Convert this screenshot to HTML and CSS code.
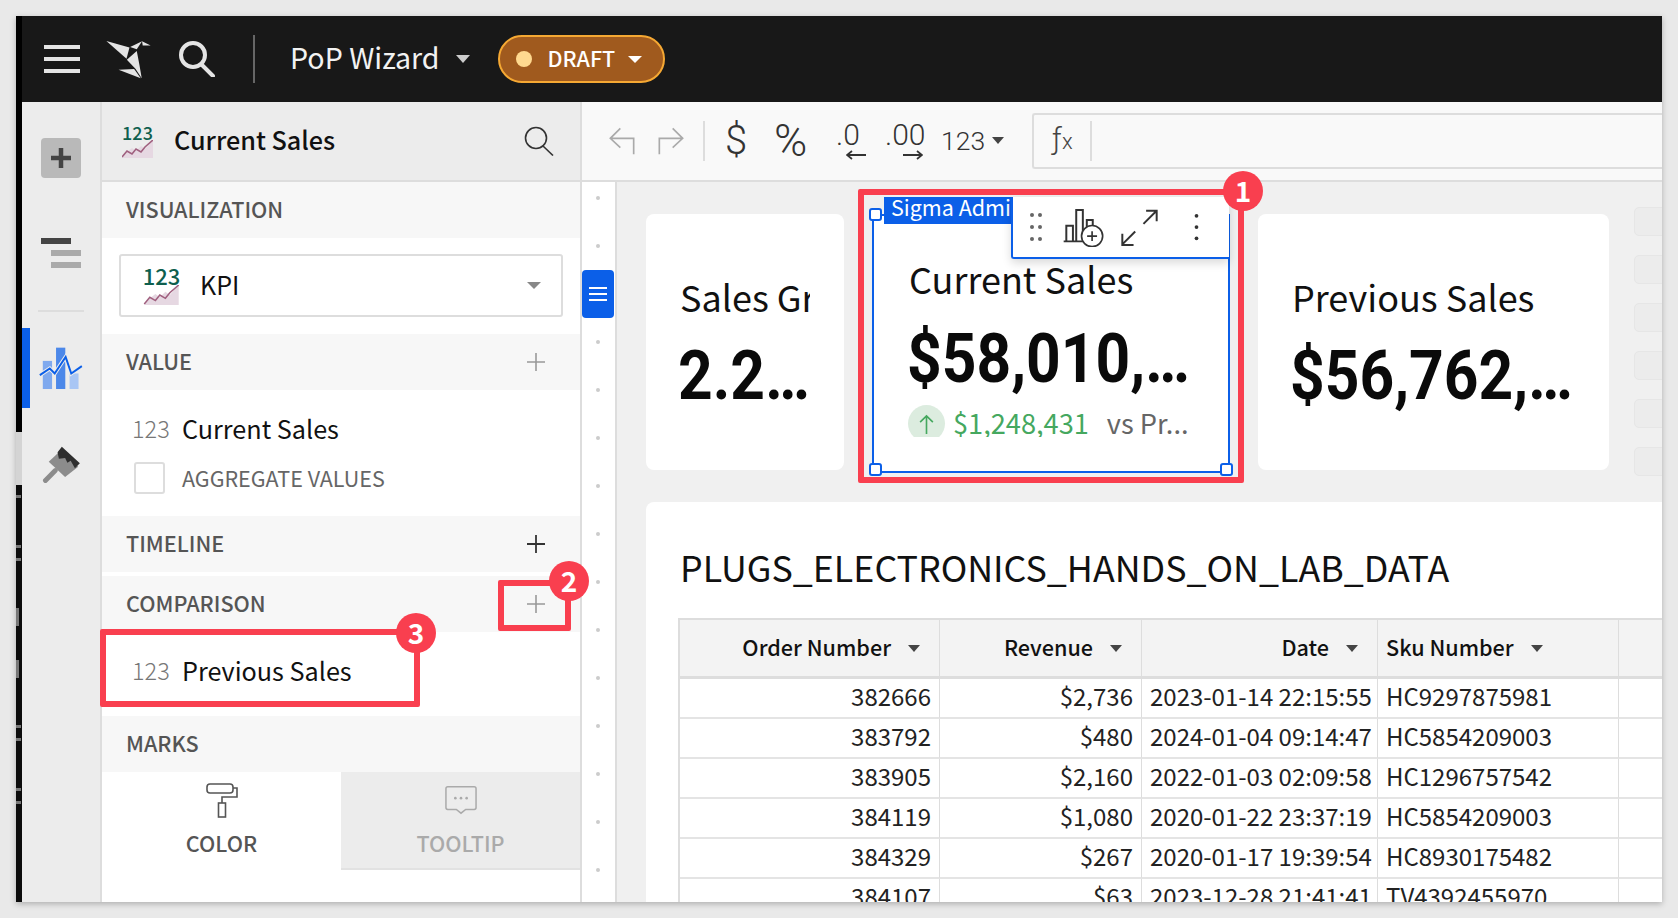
FILE: index.html
```html
<!DOCTYPE html>
<html lang="en">
<head>
    <meta charset="UTF-8">
    <title>PoP Wizard</title>
    <link rel="stylesheet" href="styles.css">
</head>
<body>
<div class="window">
    <div class="strip">
        <div class="strip-top"></div>
        <div class="strip-gap"></div>
        <div class="strip-bottom"><i></i><i class="far"></i><i></i><b class="far"></b><b></b><i class="far"></i><i></i><i class="far"></i><i></i></div>
    </div>
    <div class="main">
        <header class="topbar">
            <div class="burger"><span></span><span></span><span></span></div>
            <svg class="logo" viewBox="285 25 140 118">
                <polygon points="288,28 358,48 349,82" fill="#e4e4e4"/>
                <polygon points="360,46 396,29 380,53" fill="#e4e4e4"/>
                <polygon points="396,29 422,42 398,42" fill="#e4e4e4"/>
                <polygon points="380,58 350,85 376,112 395,141 388,100" fill="#e4e4e4"/>
                <polygon points="325,115 372,113 392,141" fill="#e4e4e4"/>
            </svg>
            <svg class="top-search" viewBox="0 0 36 36">
                <circle cx="14" cy="14" r="12" fill="none" stroke="#e4e4e4" stroke-width="4"/>
                <line x1="23" y1="24" x2="34" y2="35" stroke="#e4e4e4" stroke-width="4" stroke-linecap="round"/>
            </svg>
            <div class="top-sep"></div>
            <div class="doc-title">PoP Wizard</div>
            <span class="caret caret-top"></span>
            <div class="draft">
                <span class="draft-dot"></span>
                <span class="draft-text">DRAFT</span>
                <span class="caret caret-draft"></span>
            </div>
        </header>
        <div class="content">
            <nav class="rail">
                <div class="rail-add"><svg viewBox="0 0 22 22"><path d="M11 1V21M1 11H21" stroke="#444" stroke-width="4.5"/></svg></div>
                <div class="rail-align"><span></span><span></span><span></span></div>
                <div class="rail-line"></div>
                <div class="rail-active">
                    <svg viewBox="88 50 132 130">
                        <rect x="99" y="92" width="28" height="85" fill="#7fa9ee"/>
                        <rect x="139" y="52" width="28" height="125" fill="#4c88e9"/>
                        <rect x="180" y="130" width="27" height="47" fill="#a9c6f4"/>
                        <polyline points="90,135 120,115 135,130 168,80 185,130 217,108" fill="none" stroke="#ececec" stroke-width="12"/>
                        <polyline points="90,135 120,115 135,130 168,80 185,130 217,108" fill="none" stroke="#0b5fe8" stroke-width="6"/>
                    </svg>
                </div>
                <div class="rail-brush">
                    <svg viewBox="95 347 118 116">
                        <polygon points="115,395 150,362 205,410 165,442" fill="#8c8c8c"/>
                        <line x1="135" y1="422" x2="105" y2="452" stroke="#8c8c8c" stroke-width="15" stroke-linecap="round"/>
                        <polygon points="155,349 210,400 195,415 182,392 172,398 165,384 146,386 142,366" fill="#2e2e2e"/>
                    </svg>
                </div>
            </nav>
            <aside class="panel">
                <div class="panel-head">
                    <div class="kpi-icon kpi-icon-sm">
                        <span>123</span>
                        <svg viewBox="0 0 31 18"><polygon points="0,18 31,18 31,0 23,9 19,6 14,11 10,8 5,12" fill="#e6d8e2"/><polyline points="0,17 5,11 10,14 14,9 19,12 23,7 31,0" fill="none" stroke="#a0607f" stroke-width="1.6"/></svg>
                    </div>
                    <div class="panel-title">Current Sales</div>
                    <svg class="panel-search" viewBox="0 0 30 30">
                        <circle cx="12" cy="12" r="10.5" fill="none" stroke="#333" stroke-width="1.6"/>
                        <line x1="19" y1="20" x2="29" y2="29.5" stroke="#333" stroke-width="1.6"/>
                    </svg>
                </div>
                <div class="section"><span>VISUALIZATION</span></div>
                <div class="select-wrap">
                    <div class="select">
                        <div class="kpi-icon kpi-icon-lg">
                            <span>123</span>
                            <svg viewBox="0 0 31 18"><polygon points="0,18 31,18 31,0 23,9 19,6 14,11 10,8 5,12" fill="#e6d8e2"/><polyline points="0,17 5,11 10,14 14,9 19,12 23,7 31,0" fill="none" stroke="#a0607f" stroke-width="1.4"/></svg>
                        </div>
                        <span class="select-label">KPI</span>
                        <span class="caret caret-select"></span>
                    </div>
                </div>
                <div class="section"><span>VALUE</span><svg class="plus" viewBox="0 0 18 18"><path d="M9 0V18M0 9H18" stroke="#999" stroke-width="1.6"/></svg></div>
                <div class="value-body">
                    <div class="field"><span class="field-type">123</span><span class="field-name">Current Sales</span></div>
                    <label class="aggregate"><span class="checkbox"></span><span>AGGREGATE VALUES</span></label>
                </div>
                <div class="section"><span>TIMELINE</span><svg class="plus" viewBox="0 0 18 18"><path d="M9 0V18M0 9H18" stroke="#333" stroke-width="1.8"/></svg></div>
                <div class="section section-gap"><span>COMPARISON</span><svg class="plus" viewBox="0 0 18 18"><path d="M9 0V18M0 9H18" stroke="#999" stroke-width="1.6"/></svg></div>
                <div class="comparison-body">
                    <div class="field"><span class="field-type">123</span><span class="field-name">Previous Sales</span></div>
                </div>
                <div class="section"><span>MARKS</span></div>
                <div class="tabs">
                    <div class="tab">
                        <svg class="tab-icon" viewBox="0 0 32 35">
                            <rect x="1" y="1" width="26" height="9" rx="3" fill="none" stroke="#555" stroke-width="1.6"/>
                            <path d="M27 5H31V14H16V20" fill="none" stroke="#555" stroke-width="1.6"/>
                            <rect x="12.5" y="20" width="7" height="14" fill="none" stroke="#555" stroke-width="1.6"/>
                        </svg>
                        <span>COLOR</span>
                    </div>
                    <div class="tab tab-off">
                        <svg class="tab-icon" viewBox="0 2 34 35">
                            <path d="M3 5H31Q33 5 33 7V27Q33 29 31 29H22L17 33L12 29H3Q1 29 1 27V7Q1 5 3 5Z" fill="none" stroke="#aaa" stroke-width="1.6"/>
                            <circle cx="11" cy="17" r="1.4" fill="#aaa"/><circle cx="17" cy="17" r="1.4" fill="#aaa"/><circle cx="23" cy="17" r="1.4" fill="#aaa"/>
                        </svg>
                        <span>TOOLTIP</span>
                    </div>
                </div>
            </aside>
            <div class="work">
                <div class="toolbar">
                    <svg class="tb-arrow tb-undo" viewBox="26 38 78 84"><path d="M60 42L30 72L60 100M30 72H100V120" fill="none" stroke="#aaa" stroke-width="5"/></svg>
                    <svg class="tb-arrow tb-redo" viewBox="172 38 78 84"><path d="M216 42L246 72L216 100M246 72H176V120" fill="none" stroke="#aaa" stroke-width="5"/></svg>
                    <div class="tb-sep"></div>
                    <span class="tb-dollar">$</span>
                    <span class="tb-percent">%</span>
                    <div class="tb-dec tb-dec-less">
                        <span>.0</span>
                        <svg viewBox="0 0 20 10"><path d="M20 5H2M6 1L1 5L6 9" fill="none" stroke="#333" stroke-width="1.8"/></svg>
                    </div>
                    <div class="tb-dec tb-dec-more">
                        <span>.00</span>
                        <svg viewBox="0 0 20 10"><path d="M0 5H18M14 1L19 5L14 9" fill="none" stroke="#333" stroke-width="1.8"/></svg>
                    </div>
                    <span class="tb-num">123</span>
                    <span class="caret caret-num"></span>
                    <div class="formula"><span class="fx">ƒ<small>x</small></span><div class="fx-sep"></div></div>
                </div>
                <div class="workspace">
                    <div class="ruler">
                        <i></i><i></i><i></i><i></i><i></i><i></i><i></i><i></i><i></i><i></i><i></i><i></i><i></i><i></i><i></i>
                        <div class="ruler-btn"><span></span><span></span><span></span></div>
                    </div>
                    <div class="canvas">
                        <div class="kpi-row">
                            <div class="card card-growth">
                                <div class="kpi-title">Sales Growth</div>
                                <div class="kpi-value">2.2…</div>
                            </div>
                            <div class="card card-selected">
                                <div class="admin-tag">Sigma Admin</div>
                                <div class="card-tools">
                                    <svg class="tool-grip" viewBox="60 44 36 84"><g fill="#666"><circle cx="66" cy="50" r="6"/><circle cx="90" cy="50" r="6"/><circle cx="66" cy="86" r="6"/><circle cx="90" cy="86" r="6"/><circle cx="66" cy="122" r="6"/><circle cx="90" cy="122" r="6"/></g></svg>
                                    <svg class="tool-chart" viewBox="160 30 124 118">
                                        <path d="M162 131H226M170 131V84H190V131M200 131V36H220V131M232 90V66H250V84" fill="none" stroke="#333" stroke-width="6"/>
                                        <circle cx="248" cy="115" r="32" fill="#fff" stroke="#333" stroke-width="5"/>
                                        <path d="M248 100V130M233 115H263" stroke="#333" stroke-width="5"/>
                                    </svg>
                                    <svg class="tool-expand" viewBox="335 30 110 112"><path d="M402 75L441 36M410 35H442V67M377 98L338 137M338 105V139H372" fill="none" stroke="#333" stroke-width="6"/></svg>
                                    <svg class="tool-dots" viewBox="550 44 16 84"><g fill="#333"><circle cx="558" cy="50" r="6"/><circle cx="558" cy="86" r="6"/><circle cx="558" cy="122" r="6"/></g></svg>
                                </div>
                                <i class="handle handle-tl"></i><i class="handle handle-tr"></i><i class="handle handle-bl"></i><i class="handle handle-br"></i>
                                <div class="kpi-title">Current Sales</div>
                                <div class="kpi-value">$58,010,…</div>
                                <div class="delta">
                                    <span class="delta-icon"><svg viewBox="0 0 16 22"><path d="M8 22V2M1 9L8 2L15 9" fill="none" stroke="#45a85f" stroke-width="1.8"/></svg></span>
                                    <span class="delta-num">$1,248,431</span>
                                    <span class="delta-vs">vs Pr...</span>
                                </div>
                            </div>
                            <div class="card card-prev">
                                <div class="kpi-title">Previous Sales</div>
                                <div class="kpi-value">$56,762,…</div>
                            </div>
                            <div class="stubs"><i></i><i></i><i></i><i></i><i></i><i></i></div>
                        </div>
                        <div class="table-card">
                            <h2 class="table-title">PLUGS_ELECTRONICS_HANDS_ON_LAB_DATA</h2>
                            <table class="data">
                                <colgroup><col class="c1"><col class="c2"><col class="c3"><col class="c4"><col></colgroup>
                                <thead>
                                    <tr>
                                        <th><div class="th-in">Order Number<span class="caret caret-th"></span></div></th>
                                        <th><div class="th-in">Revenue<span class="caret caret-th"></span></div></th>
                                        <th><div class="th-in">Date<span class="caret caret-th"></span></div></th>
                                        <th><div class="th-in th-left">Sku Number<span class="caret caret-th"></span></div></th>
                                        <th></th>
                                    </tr>
                                </thead>
                                <tbody>
                                    <tr><td>382666</td><td>$2,736</td><td>2023-01-14 22:15:55</td><td class="left">HC9297875981</td><td></td></tr>
                                    <tr><td>383792</td><td>$480</td><td>2024-01-04 09:14:47</td><td class="left">HC5854209003</td><td></td></tr>
                                    <tr><td>383905</td><td>$2,160</td><td>2022-01-03 02:09:58</td><td class="left">HC1296757542</td><td></td></tr>
                                    <tr><td>384119</td><td>$1,080</td><td>2020-01-22 23:37:19</td><td class="left">HC5854209003</td><td></td></tr>
                                    <tr><td>384329</td><td>$267</td><td>2020-01-17 19:39:54</td><td class="left">HC8930175482</td><td></td></tr>
                                    <tr><td>384107</td><td>$63</td><td>2023-12-28 21:41:41</td><td class="left">TV4392455970</td><td></td></tr>
                                </tbody>
                            </table>
                        </div>
                    </div>
                </div>
            </div>
        </div>
    </div>
    <div class="mark mark-1"></div>
    <div class="mark mark-2"></div>
    <div class="mark mark-3"></div>
    <div class="badge badge-1">1</div>
    <div class="badge badge-2">2</div>
    <div class="badge badge-3">3</div>
</div>
</body>
</html>
```

FILE: styles.css
```css
* {
    box-sizing: border-box;
}
body {
    margin: 0;
    background: #e9e9e9;
    font-family: "Noto Sans CJK SC", "Noto Sans", sans-serif;
    color: #111;
}
svg {
    display: block;
    flex: none;
}
.window {
    width: 1646px;
    height: 886px;
    margin: 16px;
    position: relative;
    overflow: hidden;
    display: flex;
    box-shadow: 0 2px 6px rgba(0,0,0,.25);
}
.strip {
    width: 6px;
    flex: none;
    display: flex;
    flex-direction: column;
    background: #0c0c0c;
}
.strip-top {
    height: 416px;
    background: #000;
}
.strip-gap {
    height: 53px;
    background: #d4d4d4;
}
.strip-bottom {
    flex: 1;
    display: flex;
    flex-direction: column;
}
.strip-bottom i {
    height: 3px;
    width: 5px;
    margin-top: 10px;
    background: #777;
}
.strip-bottom b {
    height: 18px;
    width: 3px;
    margin-top: 34px;
    background: #777;
}
.strip-bottom .far {
    margin-top: 47px;
}
.main {
    flex: 1;
    min-width: 0;
    display: flex;
    flex-direction: column;
}

/* top bar */
.topbar {
    height: 86px;
    flex: none;
    background: #181818;
    display: flex;
    align-items: center;
    color: #fff;
}
.burger {
    width: 36px;
    margin-left: 22px;
    display: flex;
    flex-direction: column;
    gap: 8px;
}
.burger span {
    height: 4px;
    background: #e4e4e4;
}
.logo {
    width: 47px;
    height: 39px;
    margin-left: 25px;
}
.top-search {
    width: 36px;
    height: 36px;
    margin-left: 27px;
}
.top-sep {
    width: 2px;
    height: 48px;
    margin-left: 38px;
    background: #666;
}
.doc-title {
    margin: -5px 0 0 35px;
    font-size: 28.6px;
    line-height: 40px;
    color: #f2f2f2;
}
.caret {
    width: 0;
    height: 0;
    display: inline-block;
    flex: none;
    border-style: solid;
    border-color: #888 transparent transparent;
}
.caret-top {
    margin-left: 16px;
    border-width: 8px 7px 0;
    border-top-color: #ccc;
}
.draft {
    width: 167px;
    height: 48px;
    margin-left: 28px;
    padding-left: 16px;
    border: 2px solid #f5a833;
    border-radius: 24px;
    background: #a05a1e;
    display: flex;
    align-items: center;
}
.draft-dot {
    width: 16px;
    height: 16px;
    border-radius: 50%;
    background: #ffd98f;
}
.draft-text {
    margin: -3px 0 0 16px;
    font-size: 21.5px;
    font-weight: 500;
    line-height: 30px;
    color: #fff;
}
.caret-draft {
    margin-left: 13px;
    border-width: 7px 7px 0;
    border-top-color: #fff;
}

.content {
    flex: 1;
    min-height: 0;
    display: flex;
}

/* icon rail */
.rail {
    width: 80px;
    flex: none;
    background: #ececec;
    border-right: 2px solid #ddd;
}
.rail-add {
    width: 40px;
    height: 40px;
    margin: 36px 0 0 19px;
    background: #b9b9b9;
    border-radius: 4px;
    display: flex;
    align-items: center;
    justify-content: center;
}
.rail-add svg {
    width: 22px;
    height: 22px;
}
.rail-align {
    margin: 60px 0 0 19px;
    width: 40px;
    display: flex;
    flex-direction: column;
    align-items: flex-end;
    gap: 6px;
}
.rail-align span {
    width: 30px;
    height: 6px;
    background: #aaa;
}
.rail-align span:first-child {
    align-self: flex-start;
    background: #444;
}
.rail-line {
    width: 46px;
    height: 2px;
    margin: 42px 0 0 16px;
    background: #ddd;
}
.rail-active {
    height: 80px;
    margin-top: 16px;
    border-left: 8px solid #0b5fe8;
    display: flex;
    align-items: center;
    padding-left: 9px;
}
.rail-active svg {
    width: 44px;
    height: 43px;
}
.rail-brush {
    margin: 38px 0 0 20px;
}
.rail-brush svg {
    width: 39px;
    height: 38px;
}

/* left panel */
.panel {
    width: 480px;
    flex: none;
    background: #fff;
    border-right: 2px solid #ddd;
}
.panel-head {
    height: 80px;
    background: #ececec;
    border-bottom: 2px solid #ddd;
    padding: 0 26px 0 20px;
    display: flex;
    align-items: center;
}
.kpi-icon {
    display: flex;
    flex-direction: column;
    align-items: center;
    flex: none;
    color: #0f5f4e;
    font-weight: 500;
}
.kpi-icon-sm {
    width: 31px;
    font-size: 18px;
    line-height: 15px;
}
.kpi-icon-sm svg {
    width: 31px;
    height: 18px;
}
.kpi-icon-lg {
    width: 37px;
    font-size: 22px;
    line-height: 19px;
}
.kpi-icon-lg svg {
    width: 37px;
    height: 20px;
}
.panel-title {
    flex: 1;
    margin: -4px 0 0 21px;
    font-size: 25.2px;
    font-weight: 500;
    line-height: 34px;
}
.panel-search {
    width: 30px;
    height: 30px;
}
.section {
    height: 56px;
    padding: 0 35px 0 24px;
    background: #f7f7f7;
    display: flex;
    align-items: center;
    justify-content: space-between;
    font-size: 21.6px;
    font-weight: 500;
    color: #555;
}
.section span {
    margin-top: -4px;
}
.section-gap {
    margin-top: 4px;
}
.plus {
    width: 18px;
    height: 18px;
}
.select-wrap {
    height: 96px;
    padding: 16px 17px 0 17px;
}
.select {
    height: 63px;
    border: 2px solid #ddd;
    border-radius: 3px;
    padding: 0 20px 0 22px;
    display: flex;
    align-items: center;
}
.select-label {
    flex: 1;
    margin: -4px 0 0 20px;
    font-size: 25px;
    line-height: 34px;
}
.caret-select {
    border-width: 7px 7px 0;
    border-top-color: #888;
}
.value-body {
    height: 126px;
    padding-top: 20px;
}
.comparison-body {
    height: 84px;
    padding-top: 20px;
}
.field {
    height: 36px;
    padding-left: 30px;
    display: flex;
    align-items: center;
}
.field-type {
    width: 50px;
    font-size: 23.5px;
    font-weight: 300;
    color: #777;
}
.field-name {
    font-size: 25.2px;
}
.aggregate {
    margin: 16px 0 0 32px;
    display: flex;
    align-items: center;
    font-size: 21.5px;
    line-height: 32px;
    color: #666;
}
.checkbox {
    width: 31px;
    height: 32px;
    margin-right: 17px;
    border: 2px solid #ddd;
    border-radius: 3px;
}
.tabs {
    height: 98px;
    display: flex;
}
.tab {
    flex: 1;
    padding-top: 11px;
    display: flex;
    flex-direction: column;
    align-items: center;
    font-size: 21.6px;
    font-weight: 500;
    line-height: 30px;
    color: #555;
}
.tab-icon {
    width: 32px;
    height: 35px;
    margin-bottom: 10px;
}
.tab-off {
    background: #ececec;
    border-bottom: 2px solid #e2e2e2;
    color: #aaa;
}

/* right side */
.work {
    flex: 1;
    min-width: 0;
    display: flex;
    flex-direction: column;
}
.toolbar {
    height: 80px;
    flex: none;
    padding: 11px 0 12px 27px;
    background: #f9f9f9;
    border-bottom: 2px solid #ddd;
    display: flex;
    align-items: center;
    color: #333;
    font-family: Roboto, sans-serif;
    font-weight: 300;
}
.tb-arrow {
    width: 26px;
    height: 28px;
}
.tb-redo {
    margin-left: 23px;
}
.tb-sep {
    width: 2px;
    height: 40px;
    margin-left: 19px;
    background: #ddd;
}
.tb-dollar {
    margin-left: 20px;
    width: 22px;
    font-size: 40px;
    line-height: 40px;
}
.tb-percent {
    margin-left: 27px;
    width: 34px;
    font-size: 45px;
    line-height: 40px;
}
.tb-dec {
    display: flex;
    flex-direction: column;
    font-size: 30px;
    line-height: 26px;
}
.tb-dec svg {
    width: 20px;
    height: 10px;
    margin-left: 10px;
    margin-top: 2px;
}
.tb-dec-less {
    margin-left: 28px;
    width: 30px;
}
.tb-dec-more {
    margin-left: 19px;
    width: 37px;
}
.tb-dec-more svg {
    margin-left: 18px;
}
.tb-num {
    margin-left: 19px;
    font-size: 26.5px;
    line-height: 34px;
}
.caret-num {
    margin-left: 7px;
    border-width: 7px 6px 0;
    border-top-color: #444;
}
.formula {
    flex: 1;
    height: 56px;
    margin-left: 28px;
    border: 2px solid #ddd;
    border-right: 0;
    border-radius: 3px 0 0 3px;
    padding-left: 18px;
    display: flex;
    align-items: center;
}
.fx {
    width: 38px;
    font-size: 30px;
    line-height: 36px;
    color: #444;
}
.fx small {
    font-size: 22px;
}
.fx-sep {
    width: 2px;
    height: 40px;
    background: #ddd;
}
.workspace {
    flex: 1;
    min-height: 0;
    display: flex;
}
.ruler {
    width: 35px;
    flex: none;
    position: relative;
    background: #fff;
    border-right: 2px solid #ddd;
    padding-top: 14px;
    display: flex;
    flex-direction: column;
    gap: 44px;
}
.ruler i {
    width: 4px;
    height: 4px;
    margin-left: 14px;
    border-radius: 50%;
    background: #ccc;
}
.ruler-btn {
    position: absolute;
    top: 88px;
    left: 0;
    width: 32px;
    height: 48px;
    border-radius: 4px;
    background: #0b5fe8;
    display: flex;
    flex-direction: column;
    align-items: center;
    justify-content: center;
    gap: 4px;
}
.ruler-btn span {
    width: 18px;
    height: 2px;
    background: #fff;
}
.canvas {
    flex: 1;
    min-width: 0;
    overflow: hidden;
    background: #f0f0f0;
    padding: 32px 0 0 29px;
    display: flex;
    flex-direction: column;
}

/* kpi cards */
.kpi-row {
    display: flex;
    align-items: flex-start;
    flex: none;
    height: 256px;
}
.card {
    height: 256px;
    flex: none;
    background: #fff;
    border-radius: 8px;
    overflow: hidden;
    padding: 60px 34px 0;
}
.card-growth {
    width: 198px;
}
.card-prev {
    width: 351px;
    margin-left: 28px;
}
.card-selected {
    width: 358px;
    height: 259px;
    margin-left: 28px;
    padding: 40px 35px 0;
    border: 2px solid #0b5fe8;
    border-radius: 0;
    overflow: visible;
    position: relative;
}
.kpi-title {
    font-size: 36px;
    line-height: 44px;
    white-space: nowrap;
    overflow: hidden;
}
/* the app's bold figures are narrower than Roboto Bold */
.kpi-value {
    margin: 18px 0 0 -2px;
    font-family: Roboto, sans-serif;
    font-size: 68px;
    font-weight: 700;
    line-height: 80px;
    white-space: nowrap;
    color: #0a0a0a;
    transform: scaleX(.89);
    transform-origin: 0 50%;
}
.card-selected .kpi-value {
    margin-top: 19px;
}
.admin-tag {
    position: absolute;
    top: -19px;
    left: 10px;
    width: 130px;
    height: 27px;
    padding-left: 7px;
    overflow: hidden;
    background: #0b5fe8;
    color: #fff;
    font-size: 21.5px;
    line-height: 20px;
    white-space: nowrap;
}
.card-tools {
    position: absolute;
    top: -19px;
    left: 137px;
    width: 218px;
    height: 62px;
    background: #fff;
    border: 2px solid #0b5fe8;
    border-width: 0 0 2px 2px;
    border-radius: 0 0 0 3px;
    box-shadow: 0 4px 10px rgba(0,0,0,.15);
    display: flex;
    align-items: center;
}
.tool-grip {
    width: 12px;
    height: 28px;
    margin-left: 17px;
}
.tool-chart {
    width: 41px;
    height: 39px;
    margin-left: 21px;
}
.tool-expand {
    width: 37px;
    height: 37px;
    margin-left: 17px;
}
.tool-dots {
    width: 5px;
    height: 28px;
    margin-left: 36px;
}
.handle {
    position: absolute;
    width: 13px;
    height: 13px;
    background: #fff;
    border: 2px solid #0b5fe8;
    border-radius: 3px;
}
.handle-tl {
    top: -8px;
    left: -5px;
}
.handle-tr {
    top: -8px;
    right: -5px;
    z-index: -1;
}
.handle-bl {
    bottom: -5px;
    left: -5px;
}
.handle-br {
    bottom: -5px;
    right: -5px;
}
.delta {
    height: 32px;
    margin: 6px 0 0 -1px;
    overflow: hidden;
    display: flex;
    align-items: flex-start;
    white-space: nowrap;
}
.delta-icon {
    width: 37px;
    height: 37px;
    border-radius: 50%;
    background: #dcecdf;
    display: flex;
    align-items: center;
    justify-content: center;
    flex: none;
}
.delta-icon svg {
    width: 15px;
    height: 20px;
}
.delta-num {
    margin-left: 8px;
    font-size: 27.2px;
    line-height: 34px;
    color: #45a85f;
}
.delta-vs {
    margin-left: 18px;
    font-size: 27.2px;
    line-height: 34px;
    color: #666;
}
.stubs {
    flex: none;
    margin: -7px -40px 0 25px;
    display: flex;
    flex-direction: column;
    gap: 19px;
}
.stubs i {
    width: 60px;
    height: 29px;
    background: #ececec;
    border: 1px solid #e6e6e6;
    border-radius: 5px;
}

/* table */
.table-card {
    flex: 1;
    min-height: 0;
    margin: 32px 0 0;
    padding: 0 0 0 32px;
    background: #fff;
    border-radius: 8px 0 0 0;
    overflow: hidden;
}
.table-title {
    margin: 0;
    height: 116px;
    padding: 39px 0 0 2px;
    font-size: 35.8px;
    font-weight: 400;
    line-height: 50px;
    white-space: nowrap;
}
.data {
    width: 1100px;
    table-layout: fixed;
    border-collapse: separate;
    border-spacing: 0;
    border-top: 2px solid #ddd;
    border-left: 2px solid #ddd;
    font-size: 24px;
}
.c1 {
    width: 260px;
}
.c2 {
    width: 202px;
}
.c3 {
    width: 236px;
}
.c4 {
    width: 241px;
}
.data th {
    height: 59px;
    padding: 0 19px 3px 8px;
    background: #f3f3f3;
    border-right: 1px solid #ddd;
    border-bottom: 3px solid #ddd;
    font-weight: 500;
    font-size: 21.6px;
}
.th-in {
    display: flex;
    align-items: center;
    justify-content: flex-end;
    gap: 17px;
    white-space: nowrap;
}
.th-left {
    justify-content: flex-start;
}
.caret-th {
    border-width: 7px 6px 0;
    border-top-color: #444;
    margin-top: 4px;
}
.data td {
    height: 40px;
    padding: 0 8px 4px;
    border-right: 1px solid #ddd;
    border-bottom: 2px solid #e4e4e4;
    text-align: right;
    line-height: 34px;
    white-space: nowrap;
    color: #222;
}
.data td.left {
    text-align: left;
}

/* screenshot callouts */
.mark {
    position: absolute;
    border: 6px solid #f93f4f;
    border-radius: 2px;
}
.mark-1 {
    left: 842px;
    top: 173px;
    width: 386px;
    height: 294px;
}
.mark-2 {
    left: 482px;
    top: 564px;
    width: 73px;
    height: 51px;
}
.mark-3 {
    left: 84px;
    top: 613px;
    width: 320px;
    height: 78px;
}
.badge {
    position: absolute;
    width: 40px;
    height: 40px;
    border-radius: 50%;
    background: #f93f4f;
    color: #fff;
    font-size: 28px;
    font-weight: 700;
    line-height: 38px;
    text-align: center;
}
.badge-1 {
    left: 1207px;
    top: 155px;
}
.badge-2 {
    left: 533px;
    top: 545px;
}
.badge-3 {
    left: 380px;
    top: 597px;
}
```
